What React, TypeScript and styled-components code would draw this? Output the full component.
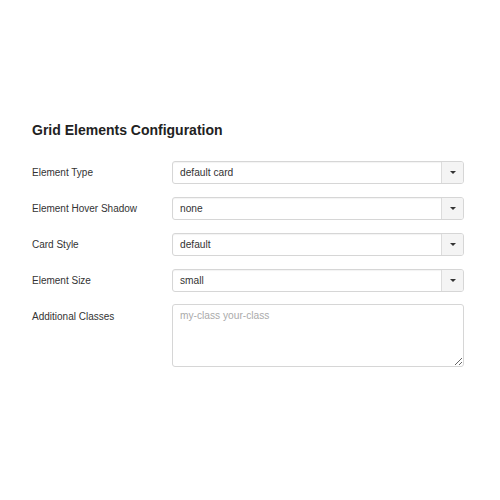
import React from "react";
import styled, { createGlobalStyle } from "styled-components";

const GlobalStyle = createGlobalStyle`
  body {
    margin: 0;
    background: #ffffff;
    font-family: "Liberation Sans", Arial, sans-serif;
    color: #333333;
  }
`;

const Page = styled.div`
  width: 500px;
  height: 500px;
  box-sizing: border-box;
  padding: 121px 36px 0 32px;
`;

const Title = styled.h2`
  margin: 0 0 22px 0;
  font-size: 14px;
  font-weight: bold;
  color: #222222;
  line-height: 18px;
`;

const Form = styled.div`
  display: grid;
  grid-template-columns: 140px 292px;
  row-gap: 13px;
  align-items: start;
`;

const Label = styled.label`
  font-size: 10px;
  line-height: 23px;
  color: #333333;
`;

const Select = styled.div`
  display: flex;
  height: 23px;
  box-sizing: border-box;
  border: 1px solid #d6d6d6;
  border-radius: 3px;
  box-shadow: inset 0 1px 1px rgba(0, 0, 0, 0.05);
  overflow: hidden;
`;

const Value = styled.div`
  flex: 1;
  padding-left: 7px;
  font-size: 10.2px;
  line-height: 21px;
  color: #333333;
`;

const Caret = styled.div`
  width: 21px;
  display: flex;
  align-items: center;
  justify-content: center;
  background: #f4f4f4;
  border-left: 1px solid #dcdcdc;
  &::after {
    content: "";
    border-left: 3px solid transparent;
    border-right: 3px solid transparent;
    border-top: 3px solid #333333;
  }
`;

const TextArea = styled.textarea`
  height: 63px;
  margin-top: -1px;
  box-sizing: border-box;
  border: 1px solid #d6d6d6;
  border-radius: 3px;
  padding: 5px 7px;
  font-family: "Liberation Sans", Arial, sans-serif;
  font-size: 10.2px;
  color: #333333;
  resize: vertical;
  &::placeholder {
    color: #aaaaaa;
  }
`;

const rows = [
  { label: "Element Type", value: "default card" },
  { label: "Element Hover Shadow", value: "none" },
  { label: "Card Style", value: "default" },
  { label: "Element Size", value: "small" },
];

export default function App() {
  return (
    <>
      <GlobalStyle />
      <Page>
        <Title>Grid Elements Configuration</Title>
        <Form>
          {rows.map((r) => (
            <React.Fragment key={r.label}>
              <Label>{r.label}</Label>
              <Select>
                <Value>{r.value}</Value>
                <Caret />
              </Select>
            </React.Fragment>
          ))}
          <Label>Additional Classes</Label>
          <TextArea placeholder="my-class your-class" />
        </Form>
      </Page>
    </>
  );
}
